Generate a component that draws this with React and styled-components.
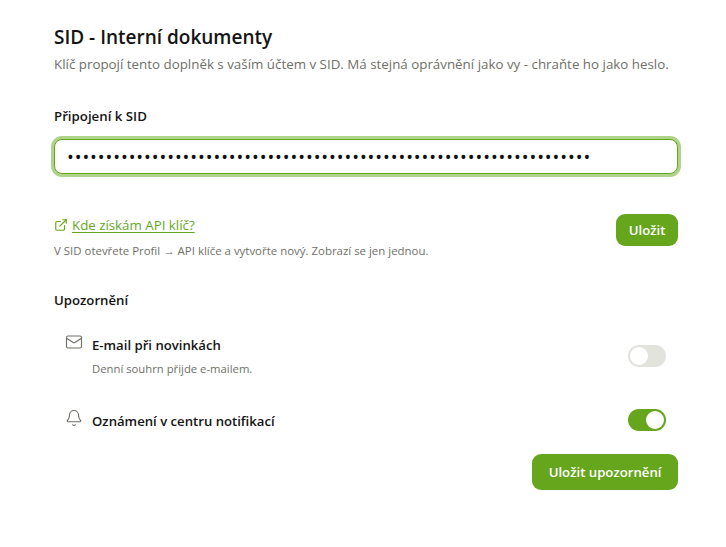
import styled, { createGlobalStyle } from 'styled-components';
import { ExternalLink, Mail, Bell } from 'lucide-react';

const GlobalStyle = createGlobalStyle`
    html, body {
        margin: 0;
        background: #fff;
    }
    body {
        font-family: "Open Sans", "Noto Sans", "Liberation Sans", sans-serif;
        color: #111;
    }
`;

const Page = styled.main`
    display: flex;
    flex-direction: column;
    width: 624px;
    padding: 24px 48px 0 54px;
`;

const Title = styled.h1`
    margin: 0;
    font-size: 19px;
    line-height: 26px;
    font-weight: 600;
    color: #141414;
`;

const Subtitle = styled.p`
    margin: 4px 0 0;
    font-size: 13.35px;
    line-height: 20px;
    color: #6f6f68;
    white-space: nowrap;
`;

const Label = styled.label`
    display: block;
    margin-top: 32px;
    font-size: 13.25px;
    line-height: 20px;
    font-weight: 600;
    color: #141414;
`;

const KeyInput = styled.input`
    display: block;
    box-sizing: border-box;
    width: 100%;
    height: 35px;
    margin-top: 13px;
    padding: 0 12px;
    border: 1px solid #65a61d;
    border-radius: 8px;
    outline: none;
    box-shadow: 0 0 0 3px #b0d38a;
    background: #fff;
    font-family: "Open Sans", sans-serif;
    font-size: 18px;
    letter-spacing: 0.94px;
    color: #111;
`;

const KeyActions = styled.div`
    display: flex;
    justify-content: space-between;
    align-items: flex-start;
    margin-top: 40px;
`;

const Help = styled.div`
    display: flex;
    flex-direction: column;
    gap: 9px;
    padding-top: 2px;
`;

const HelpLink = styled.a`
    display: flex;
    align-items: center;
    gap: 4px;
    font-size: 13.3px;
    line-height: 18px;
    color: #65a61d;
    text-decoration: underline;
    text-underline-offset: 2px;
`;

const HelpText = styled.p`
    margin: 0;
    font-size: 11.45px;
    line-height: 16px;
    color: #6f6f68;
`;

const Button = styled.button`
    height: ${p => p.$height}px;
    padding: 0 ${p => p.$pad}px;
    border: none;
    border-radius: 9px;
    background: #65a61d;
    color: #fff;
    font-family: "Open Sans", sans-serif;
    font-size: 13.2px;
    font-weight: 600;
`;

const SectionTitle = styled.h2`
    margin: 31px 0 0;
    font-size: 13.2px;
    line-height: 20px;
    font-weight: 600;
    color: #141414;
`;

const Rows = styled.div`
    display: flex;
    flex-direction: column;
    gap: 33px;
    margin-top: 26px;
    padding: 0 12px 0 11px;
`;

const Row = styled.div`
    display: flex;
    justify-content: space-between;
    align-items: center;
`;

const RowMain = styled.div`
    display: flex;
    align-items: flex-start;
    gap: 9px;
    padding-top: ${p => p.$top || 0}px;
`;

const RowIcon = styled.span`
    display: flex;
    width: 18px;
    margin-top: -3px;
    color: #6f6f68;
`;

const RowTitle = styled.div`
    font-size: 13.15px;
    line-height: 18px;
    font-weight: 600;
    color: #141414;
`;

const RowHint = styled.div`
    margin-top: 7px;
    font-size: 11.3px;
    line-height: 15px;
    color: #6f6f68;
`;

const Toggle = styled.span`
    position: relative;
    flex: none;
    width: 38px;
    height: 22px;
    border-radius: 11px;
    background: ${p => (p.$on ? '#65a61d' : '#e3e3de')};

    &::after {
        content: "";
        position: absolute;
        top: 2px;
        left: ${p => (p.$on ? '18px' : '2px')};
        width: 18px;
        height: 18px;
        border-radius: 50%;
        background: #fff;
    }
`;

const Footer = styled.div`
    display: flex;
    justify-content: flex-end;
    margin-top: 23px;
`;

export default function App() {
    return (
        <Page>
            <GlobalStyle />
            <Title>SID - Interní dokumenty</Title>
            <Subtitle>Klíč propojí tento doplněk s vaším účtem v SID. Má stejná oprávnění jako vy - chraňte ho jako heslo.</Subtitle>

            <Label htmlFor="key">Připojení k SID</Label>
            <KeyInput id="key" type="password" readOnly value={'x'.repeat(68)} />

            <KeyActions>
                <Help>
                    <HelpLink href="#">
                        <ExternalLink size={14} />
                        Kde získám API klíč?
                    </HelpLink>
                    <HelpText>V SID otevřete Profil → API klíče a vytvořte nový. Zobrazí se jen jednou.</HelpText>
                </Help>
                <Button $height={32} $pad={12.5}>Uložit</Button>
            </KeyActions>

            <SectionTitle>Upozornění</SectionTitle>
            <Rows>
                <Row>
                    <RowMain>
                        <RowIcon><Mail size={18} strokeWidth={1.5} /></RowIcon>
                        <div>
                            <RowTitle>E-mail při novinkách</RowTitle>
                            <RowHint>Denní souhrn přijde e-mailem.</RowHint>
                        </div>
                    </RowMain>
                    <Toggle />
                </Row>
                <Row>
                    <RowMain $top={2}>
                        <RowIcon><Bell size={18} strokeWidth={1.5} /></RowIcon>
                        <RowTitle>Oznámení v centru notifikací</RowTitle>
                    </RowMain>
                    <Toggle $on />
                </Row>
            </Rows>
            <Footer>
                <Button $height={36} $pad={16.5}>Uložit upozornění</Button>
            </Footer>
        </Page>
    );
}
